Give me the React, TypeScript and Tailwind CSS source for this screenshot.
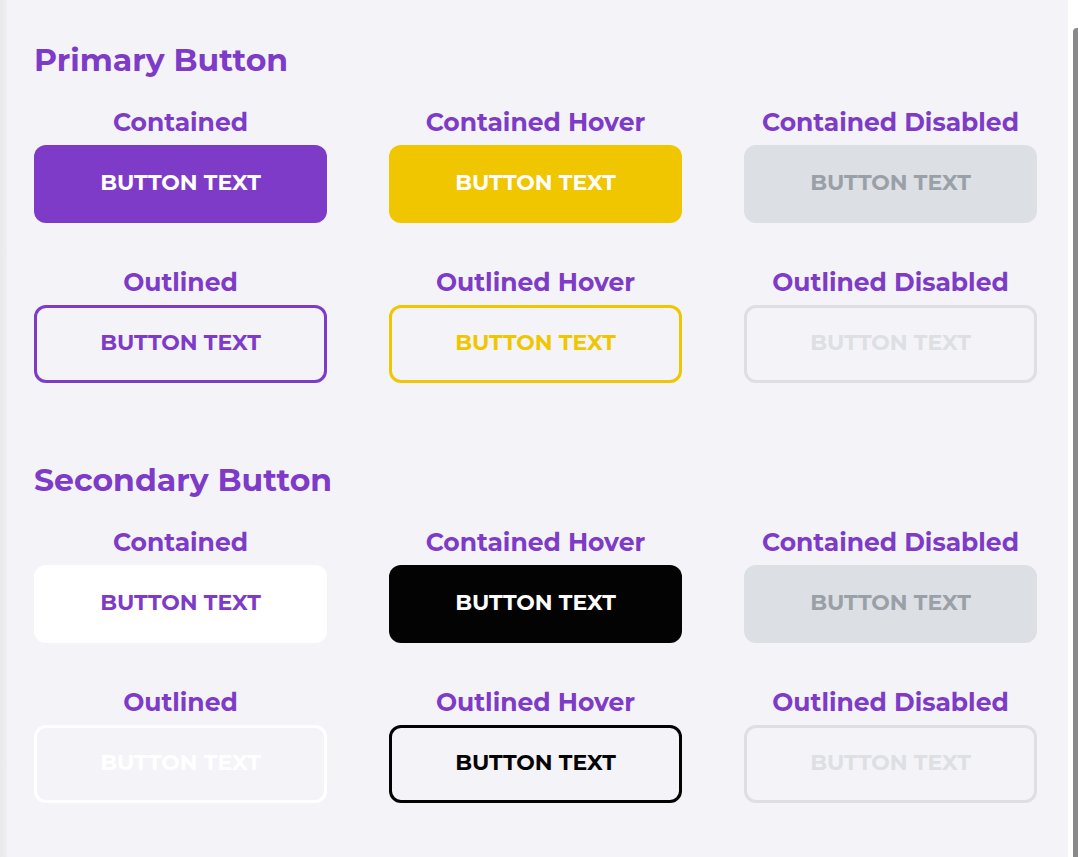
import React from 'react';

type Variant = {
    label: string;
    className: string;
};

const primary: Variant[][] = [
    [
        { label: 'Contained', className: 'bg-[#7e3bc8] text-white' },
        { label: 'Contained Hover', className: 'bg-[#f0c600] text-white' },
        { label: 'Contained Disabled', className: 'bg-[#dcdfe3] text-[#9aa0a8]' },
    ],
    [
        { label: 'Outlined', className: 'border-[3px] border-[#7e3bc8] text-[#7e3bc8]' },
        { label: 'Outlined Hover', className: 'border-[3px] border-[#f0c600] text-[#f0c600]' },
        { label: 'Outlined Disabled', className: 'border-[3px] border-[#dddfe3] text-[#dddfe3]' },
    ],
];

const secondary: Variant[][] = [
    [
        { label: 'Contained', className: 'bg-white text-[#7e3bc8]' },
        { label: 'Contained Hover', className: 'bg-[#030303] text-white' },
        { label: 'Contained Disabled', className: 'bg-[#dcdfe3] text-[#9aa0a8]' },
    ],
    [
        { label: 'Outlined', className: 'border-[3px] border-white text-white' },
        { label: 'Outlined Hover', className: 'border-[3px] border-[#030303] text-[#030303]' },
        { label: 'Outlined Disabled', className: 'border-[3px] border-[#dddfe3] text-[#dddfe3]' },
    ],
];

const ButtonRow = ({ items, first }: { items: Variant[]; first?: boolean }) => (
    <div className={`grid grid-cols-3 gap-x-[62px] ${first ? 'mt-[31px]' : 'mt-[45px]'}`}>
        {items.map((v) => (
            <div key={v.label} className="flex flex-col items-center">
                <p className="text-[25px] leading-[28px] font-bold text-[#7e3bc8] mb-[9px]">{v.label}</p>
                <button className={`w-full h-[78px] pb-[3px] rounded-[12px] flex items-center justify-center text-[22px] font-bold ${v.className}`}>
                    BUTTON TEXT
                </button>
            </div>
        ))}
    </div>
);

const Section = ({ title, rows, className }: { title: string; rows: Variant[][]; className?: string }) => (
    <section className={className}>
        <h2 className="text-[31.5px] leading-[34px] font-bold text-[#7e3bc8]">{title}</h2>
        <ButtonRow items={rows[0]} first />
        <ButtonRow items={rows[1]} />
    </section>
);

export default function App() {
    return (
        <div className="flex w-[1078px] h-[857px] overflow-hidden bg-white" style={{ fontFamily: 'Montserrat, Inter, "Noto Sans", sans-serif' }}>
            <div className="w-[7px] bg-gradient-to-r from-[#e9e9ec] to-[#efeff2]" />
            <main className="w-[1061px] bg-[#f4f3f8] pl-[27px] pr-[31px] pt-[43px]">
                <Section title="Primary Button" rows={primary} />
                <Section title="Secondary Button" rows={secondary} className="mt-[80px]" />
            </main>
            <div className="w-[5px] bg-white" />
            <div className="w-[5px] flex flex-col bg-white">
                <div className="mt-[28px] flex-1 bg-[#8a8a8a] rounded-tl-[4px]" />
            </div>
        </div>
    );
}
